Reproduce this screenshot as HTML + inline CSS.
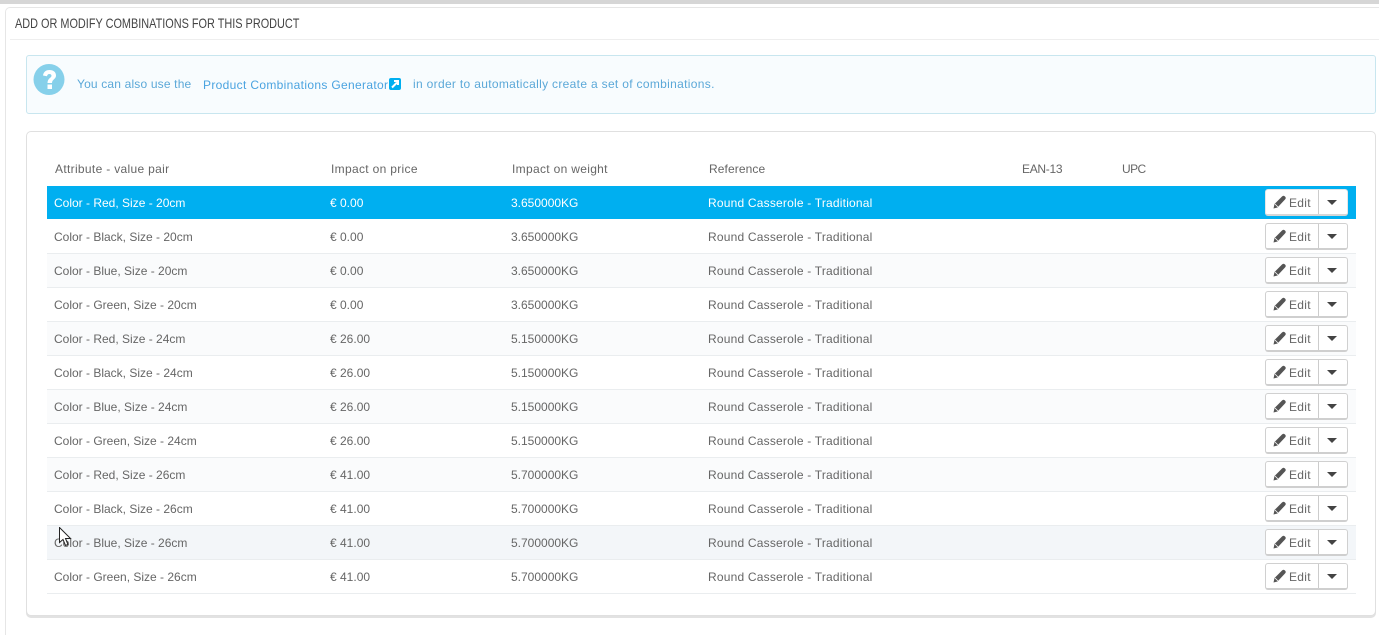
<!DOCTYPE html>
<html>
<head>
<meta charset="utf-8">
<style>
html,body{margin:0;padding:0;width:1379px;height:635px;overflow:hidden;background:#fff}
body{position:relative;font-family:"Liberation Sans",sans-serif;font-size:12px;color:#666}
div,span,a{position:absolute;box-sizing:border-box;white-space:nowrap}
#top{left:0;top:0;width:1379px;height:4px;background:#d6d6d6}
#outer{left:5px;top:7px;width:1374px;height:628px;border:1px solid #e6e6e6;border-right:0;border-bottom:0;border-top-left-radius:5px}
#title{left:15px;top:15px;font-size:14px;line-height:16px;color:#444;transform:scaleX(.778);transform-origin:0 0}
#hr{left:10px;top:39px;width:1369px;height:1px;background:#eee}
#alert{left:26px;top:55px;width:1350px;height:59px;background:#f8fcfe;border:1px solid #c8e6ef;border-radius:3px}
#q{left:33px;top:64px;width:32px;height:31px}
.at{top:76px;line-height:16px;color:#5ba8d8;letter-spacing:.32px}
#panel{left:26px;top:131px;width:1350px;height:485px;background:#fff;border:1px solid #e0e0e0;border-radius:5px;box-shadow:0 2px 0 #e2e2e2}
.th{top:161px;line-height:16px;color:#666;letter-spacing:.32px}
.row{left:47px;width:1309px;height:34px;border-bottom:1px solid #eaedef}
.row span{top:9px;line-height:16px}
.c1{left:7px;letter-spacing:0}.c2{left:283px;letter-spacing:0}.c3{left:464px;letter-spacing:0}.c4{left:661px;letter-spacing:.2px}
.alt{background:#fafbfc}
.sel{background:#00aff0;border-bottom:0;color:#fff;height:33px}
.hov{background:#f3f6f9}
.btn{left:1218px;top:3px;width:83px;height:27px;background:#fff;border:1px solid #d0d0d0;border-bottom:2px solid #cfcfcf;border-radius:3px}
.sel .btn{border-color:#e6e6e6;border-bottom-color:#d6d6d6}
.btn i{position:absolute;left:52px;top:0;bottom:0;width:1px;background:#ccc}
.btn b{position:absolute;left:61px;top:10px;width:0;height:0;border-left:5px solid transparent;border-right:5px solid transparent;border-top:5px solid #444}
.btn svg{position:absolute;left:7px;top:5px;width:13px;height:14px}
.btn em{position:absolute;left:23px;top:5px;font-style:normal;line-height:16px;color:#666;letter-spacing:.3px}
</style>
</head>
<body>
<div id="top"></div>
<div id="outer"></div>
<div id="title">ADD OR MODIFY COMBINATIONS FOR THIS PRODUCT</div>
<div id="hr"></div>
<div id="alert"></div>
<svg id="q" style="position:absolute" viewBox="0 0 32 31"><circle cx="16" cy="15.5" r="15.5" fill="#86d0ea"/><path d="M10 11.500C10.500 7.500 13.500 6 16.500 6C20.500 6 23 8.200 23 11.500C23 15.200 19 15.300 19 19H14.500C14.500 14.200 18.500 14 18.500 11.800C18.500 10.500 17.500 10 16.300 10C15 10 14.300 10.800 14 12.300Z" fill="#fff"/><rect x="14.500" y="20.500" width="4.500" height="4.500" fill="#fff"/></svg>
<span class="at" style="left:77px;letter-spacing:.17px">You can also use the</span>
<a class="at" style="left:203px;top:77px;color:#4aa3e0;letter-spacing:.33px">Product Combinations Generator</a>
<svg style="position:absolute;left:389px;top:78px" width="12" height="12" viewBox="0 0 12 12"><rect width="12" height="12" rx="2" fill="#00aff0"/><path d="M3 9.500L8 4.500M5 3H9V7" stroke="#fff" stroke-width="2" fill="none"/></svg>
<span class="at" style="left:413px">in order to automatically create a set of combinations.</span>
<div id="panel"></div>
<span class="th" style="left:55px">Attribute - value pair</span>
<span class="th" style="left:331px">Impact on price</span>
<span class="th" style="left:512px">Impact on weight</span>
<span class="th" style="left:709px;letter-spacing:.1px">Reference</span>
<span class="th" style="left:1022px;letter-spacing:-.3px">EAN-13</span>
<span class="th" style="left:1122px;letter-spacing:-.6px">UPC</span>

<svg width="0" height="0" style="position:absolute"><defs><symbol id="p" viewBox="0 0 13 14"><path d="M0.500 13.500L1.500 9L9 1.500C10 .5 11 .5 12 1.500C13 2.500 13 3.500 12 4.500L4.500 12.500Z" fill="#555"/><path d="M2 9L5 12" stroke="#fff" stroke-width=".8"/></symbol></defs></svg>

<div class="row sel" style="top:186px"><span class="c1">Color - Red, Size - 20cm</span><span class="c2">€ 0.00</span><span class="c3">3.650000KG</span><span class="c4">Round Casserole - Traditional</span><div class="btn"><svg><use href="#p"/></svg><em>Edit</em><i></i><b></b></div></div>
<div class="row" style="top:220px"><span class="c1">Color - Black, Size - 20cm</span><span class="c2">€ 0.00</span><span class="c3">3.650000KG</span><span class="c4">Round Casserole - Traditional</span><div class="btn"><svg><use href="#p"/></svg><em>Edit</em><i></i><b></b></div></div>
<div class="row alt" style="top:254px"><span class="c1">Color - Blue, Size - 20cm</span><span class="c2">€ 0.00</span><span class="c3">3.650000KG</span><span class="c4">Round Casserole - Traditional</span><div class="btn"><svg><use href="#p"/></svg><em>Edit</em><i></i><b></b></div></div>
<div class="row" style="top:288px"><span class="c1">Color - Green, Size - 20cm</span><span class="c2">€ 0.00</span><span class="c3">3.650000KG</span><span class="c4">Round Casserole - Traditional</span><div class="btn"><svg><use href="#p"/></svg><em>Edit</em><i></i><b></b></div></div>
<div class="row alt" style="top:322px"><span class="c1">Color - Red, Size - 24cm</span><span class="c2">€ 26.00</span><span class="c3">5.150000KG</span><span class="c4">Round Casserole - Traditional</span><div class="btn"><svg><use href="#p"/></svg><em>Edit</em><i></i><b></b></div></div>
<div class="row" style="top:356px"><span class="c1">Color - Black, Size - 24cm</span><span class="c2">€ 26.00</span><span class="c3">5.150000KG</span><span class="c4">Round Casserole - Traditional</span><div class="btn"><svg><use href="#p"/></svg><em>Edit</em><i></i><b></b></div></div>
<div class="row alt" style="top:390px"><span class="c1">Color - Blue, Size - 24cm</span><span class="c2">€ 26.00</span><span class="c3">5.150000KG</span><span class="c4">Round Casserole - Traditional</span><div class="btn"><svg><use href="#p"/></svg><em>Edit</em><i></i><b></b></div></div>
<div class="row" style="top:424px"><span class="c1">Color - Green, Size - 24cm</span><span class="c2">€ 26.00</span><span class="c3">5.150000KG</span><span class="c4">Round Casserole - Traditional</span><div class="btn"><svg><use href="#p"/></svg><em>Edit</em><i></i><b></b></div></div>
<div class="row alt" style="top:458px"><span class="c1">Color - Red, Size - 26cm</span><span class="c2">€ 41.00</span><span class="c3">5.700000KG</span><span class="c4">Round Casserole - Traditional</span><div class="btn"><svg><use href="#p"/></svg><em>Edit</em><i></i><b></b></div></div>
<div class="row" style="top:492px"><span class="c1">Color - Black, Size - 26cm</span><span class="c2">€ 41.00</span><span class="c3">5.700000KG</span><span class="c4">Round Casserole - Traditional</span><div class="btn"><svg><use href="#p"/></svg><em>Edit</em><i></i><b></b></div></div>
<div class="row hov" style="top:526px"><span class="c1">Color - Blue, Size - 26cm</span><span class="c2">€ 41.00</span><span class="c3">5.700000KG</span><span class="c4">Round Casserole - Traditional</span><div class="btn"><svg><use href="#p"/></svg><em>Edit</em><i></i><b></b></div></div>
<div class="row" style="top:560px"><span class="c1">Color - Green, Size - 26cm</span><span class="c2">€ 41.00</span><span class="c3">5.700000KG</span><span class="c4">Round Casserole - Traditional</span><div class="btn"><svg><use href="#p"/></svg><em>Edit</em><i></i><b></b></div></div>

<svg style="position:absolute;left:59px;top:527px" width="13" height="20" viewBox="0 0 13 20"><path d="M.5.5V15.500L4 12.500L6.500 18.500L9 17.500L6.500 11.500H11.500Z" fill="#fff" stroke="#222" stroke-width="1"/></svg>
</body>
</html>
